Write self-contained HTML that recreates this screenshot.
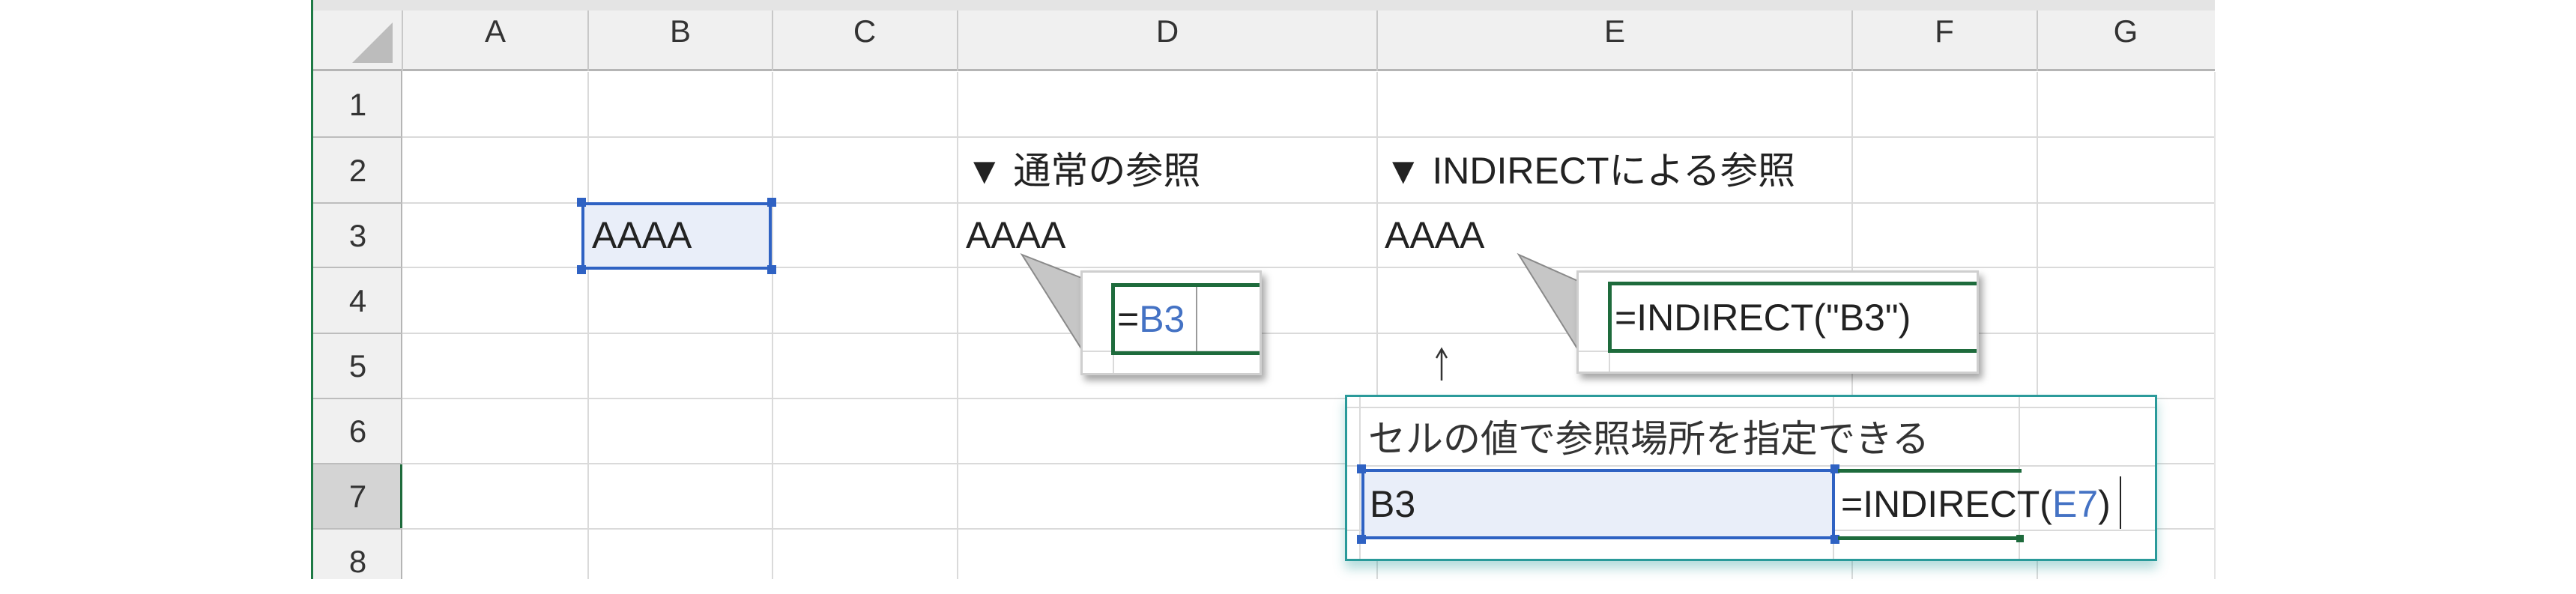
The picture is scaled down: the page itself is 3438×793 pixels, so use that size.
<!DOCTYPE html>
<html><head><meta charset="utf-8"><style>
*{margin:0;padding:0;box-sizing:border-box}
body{width:3438px;height:773px;background:#fff;position:relative;overflow:hidden;font-family:"Liberation Sans","Noto Sans CJK JP",sans-serif;color:#222}
.a{position:absolute}
.h{position:absolute;height:2px;background:#dadada}
.v{position:absolute;width:2px;background:#dadada}
.ch{position:absolute;top:21px;font-size:42px;line-height:42px;width:200px;margin-left:-100px;text-align:center;color:#333}
.rn{position:absolute;left:418px;width:119px;text-align:center;font-size:42px;line-height:87px;color:#333}
.t{position:absolute;font-size:50px;line-height:50px;white-space:nowrap}
.bl{color:#4472c4}
.hd{position:absolute;width:12px;height:12px;background:#2f62c3}
</style></head><body>
<!-- top strip -->
<div class="a" style="left:418px;top:0;width:2538px;height:14px;background:#e4e4e4"></div>
<!-- header row -->
<div class="a" style="left:418px;top:14px;width:2538px;height:81px;background:#f0f0f0;border-bottom:3px solid #b5b5b5"></div>
<!-- row header -->
<div class="a" style="left:418px;top:95px;width:119px;height:678px;background:#f0f0f0;border-right:2px solid #b5b5b5"></div>
<div class="a" style="left:418px;top:619px;width:119px;height:87px;background:#d4d4d4;border-right:3px solid #1e6b3c"></div>
<!-- green left line -->
<div class="a" style="left:415px;top:0;width:3px;height:773px;background:#1e7a45"></div>
<!-- corner triangle -->
<svg class="a" style="left:468px;top:28px" width="58" height="58"><polygon points="56,2 56,56 2,56" fill="#bcbcbc"/></svg>
<!-- header col separators -->
<div class="a" style="left:536px;top:14px;width:2px;height:81px;background:#c8c8c8"></div>
<div class="a" style="left:784px;top:14px;width:2px;height:81px;background:#c8c8c8"></div>
<div class="a" style="left:1030px;top:14px;width:2px;height:81px;background:#c8c8c8"></div>
<div class="a" style="left:1277px;top:14px;width:2px;height:81px;background:#c8c8c8"></div>
<div class="a" style="left:1837px;top:14px;width:2px;height:81px;background:#c8c8c8"></div>
<div class="a" style="left:2471px;top:14px;width:2px;height:81px;background:#c8c8c8"></div>
<div class="a" style="left:2718px;top:14px;width:2px;height:81px;background:#c8c8c8"></div>
<!-- col headers -->
<div class="ch" style="left:661px">A</div>
<div class="ch" style="left:908px">B</div>
<div class="ch" style="left:1154px">C</div>
<div class="ch" style="left:1558px">D</div>
<div class="ch" style="left:2155px">E</div>
<div class="ch" style="left:2595px">F</div>
<div class="ch" style="left:2837px">G</div>
<!-- row numbers & header separators -->
<div class="rn" style="top:96px">1</div>
<div class="rn" style="top:184px">2</div>
<div class="rn" style="top:271px">3</div>
<div class="rn" style="top:358px">4</div>
<div class="rn" style="top:445px">5</div>
<div class="rn" style="top:532px">6</div>
<div class="rn" style="top:619px">7</div>
<div class="rn" style="top:706px">8</div>
<div class="a" style="left:418px;top:182px;width:119px;height:2px;background:#bdbdbd"></div>
<div class="a" style="left:418px;top:270px;width:119px;height:2px;background:#bdbdbd"></div>
<div class="a" style="left:418px;top:356px;width:119px;height:2px;background:#bdbdbd"></div>
<div class="a" style="left:418px;top:444px;width:119px;height:2px;background:#bdbdbd"></div>
<div class="a" style="left:418px;top:531px;width:119px;height:2px;background:#bdbdbd"></div>
<div class="a" style="left:418px;top:618px;width:119px;height:2px;background:#bdbdbd"></div>
<div class="a" style="left:418px;top:705px;width:119px;height:2px;background:#bdbdbd"></div>
<!-- grid -->
<div class="h" style="left:537px;top:182px;width:2419px"></div>
<div class="h" style="left:537px;top:270px;width:2419px"></div>
<div class="h" style="left:537px;top:356px;width:2419px"></div>
<div class="h" style="left:537px;top:444px;width:2419px"></div>
<div class="h" style="left:537px;top:531px;width:2419px"></div>
<div class="h" style="left:537px;top:618px;width:2419px"></div>
<div class="h" style="left:537px;top:705px;width:2419px"></div>
<div class="v" style="left:784px;top:96px;height:677px"></div>
<div class="v" style="left:1030px;top:96px;height:677px"></div>
<div class="v" style="left:1277px;top:96px;height:677px"></div>
<div class="v" style="left:1837px;top:96px;height:677px"></div>
<div class="v" style="left:2471px;top:96px;height:677px"></div>
<div class="v" style="left:2718px;top:96px;height:677px"></div>
<div class="v" style="left:2955px;top:96px;height:677px;background:#e4e4e4"></div>
<!-- B3 selection -->
<div class="a" style="left:776px;top:270px;width:254px;height:90px;background:#e9eef9;border:4px solid #2f62c3"></div>
<div class="hd" style="left:770px;top:264px"></div>
<div class="hd" style="left:1024px;top:264px"></div>
<div class="hd" style="left:770px;top:354px"></div>
<div class="hd" style="left:1024px;top:354px"></div>
<div class="t" style="left:790px;top:289px">AAAA</div>
<!-- D / E texts -->
<div class="t" style="left:1289px;top:203px">▼ 通常の参照</div>
<div class="t" style="left:1289px;top:289px">AAAA</div>
<div class="t" style="left:1848px;top:203px">▼ INDIRECTによる参照</div>
<div class="t" style="left:1848px;top:289px">AAAA</div>
<!-- callout 1 -->
<svg class="a" style="left:0;top:0" width="3438" height="773">
<polygon points="1364,340 1446,372 1446,470" fill="#c6c6c6" stroke="#8a8a8a" stroke-width="2"/>
<polygon points="2027,340 2108,376 2108,470" fill="#c6c6c6" stroke="#8a8a8a" stroke-width="2"/>
<line x1="1924" y1="468" x2="1924" y2="508" stroke="#333" stroke-width="2.5"/>
<polyline points="1917,478 1924,466 1931,478" fill="none" stroke="#333" stroke-width="2.5"/>
</svg>
<div class="a" style="left:1442px;top:361px;width:242px;height:140px;background:#fff;border:3px solid #cfcfcf;box-shadow:5px 7px 9px rgba(0,0,0,.35);overflow:hidden">
 <div class="a" style="left:0;top:104px;width:240px;height:2px;background:#dadada"></div>
 <div class="a" style="left:40px;top:104px;width:2px;height:40px;background:#dadada"></div>
 <div class="a" style="left:38px;top:14px;width:220px;height:96px;border:5px solid #1e6b3c;border-right:none"></div>
 <div class="a" style="left:151px;top:19px;width:2px;height:86px;background:#9a9a9a"></div>
 <div class="t" style="left:46px;top:37px">=<span class="bl">B3</span></div>
</div>
<!-- callout 2 -->
<div class="a" style="left:2104px;top:361px;width:537px;height:138px;background:#fff;border:3px solid #cfcfcf;box-shadow:5px 7px 9px rgba(0,0,0,.35);overflow:hidden">
 <div class="a" style="left:0;top:104px;width:540px;height:2px;background:#dadada"></div>
 <div class="a" style="left:40px;top:104px;width:2px;height:40px;background:#dadada"></div>
 <div class="a" style="left:39px;top:12px;width:520px;height:95px;border:5px solid #1e6b3c;border-right:none"></div>
 <div class="t" style="left:48px;top:35px">=INDIRECT("B3")</div>
</div>
<!-- bottom panel -->
<div class="a" style="left:1795px;top:527px;width:1084px;height:222px;background:#fff;border:3px solid #2a9a9a;box-shadow:0 10px 14px rgba(42,154,154,.35);overflow:hidden">
 <div class="a" style="left:0;top:13px;width:1084px;height:2px;background:#dadada"></div>
 <div class="a" style="left:0;top:91px;width:1084px;height:2px;background:#dadada"></div>
 <div class="a" style="left:0;top:177px;width:1084px;height:2px;background:#dadada"></div>
 <div class="a" style="left:16px;top:0;width:2px;height:222px;background:#dadada"></div>
 <div class="a" style="left:648px;top:0;width:2px;height:222px;background:#dadada"></div>
 <div class="a" style="left:896px;top:0;width:2px;height:222px;background:#dadada"></div>
 <div class="t" style="left:28px;top:31px;color:#333">セルの値で参照場所を指定できる</div>
 <div class="a" style="left:19px;top:96px;width:632px;height:94px;background:#e9eef9;border:4px solid #2f62c3"></div>
 <div class="hd" style="left:13px;top:90px"></div>
 <div class="hd" style="left:645px;top:90px"></div>
 <div class="hd" style="left:13px;top:184px"></div>
 <div class="hd" style="left:645px;top:184px"></div>
 <div class="a" style="left:655px;top:96px;width:245px;height:5px;background:#1e6b3c"></div>
 <div class="a" style="left:655px;top:186px;width:245px;height:5px;background:#1e6b3c"></div>
 <div class="a" style="left:893px;top:184px;width:10px;height:10px;background:#1e6b3c"></div>
 <div class="t" style="left:30px;top:118px">B3</div>
 <div class="t" style="left:659px;top:118px">=INDIRECT(<span class="bl">E7</span>)</div>
 <div class="a" style="left:1031px;top:106px;width:2px;height:70px;background:#222"></div>
</div>
</body></html>
